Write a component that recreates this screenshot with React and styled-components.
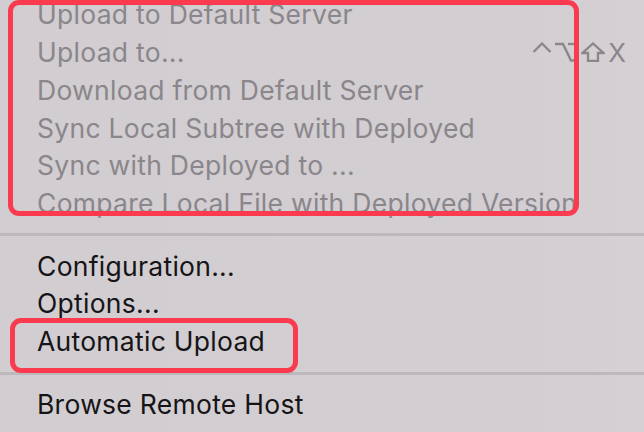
import React from "react";
import styled, { createGlobalStyle } from "styled-components";

const GlobalStyle = createGlobalStyle`
  html, body {
    margin: 0;
    padding: 0;
    background: #d1cdd1;
  }
  body {
    width: 644px;
    height: 432px;
    overflow: hidden;
    font-family: "Inter", "Liberation Sans", sans-serif;
  }
`;

const Menu = styled.div`
  position: relative;
  width: 644px;
  height: 432px;
  overflow: hidden;
  background: linear-gradient(90deg, #d1cdd1 0%, #d2ced2 80%, #d6d0d4 100%);
`;

const Group = styled.div`
  display: flex;
  flex-direction: column;
  margin-top: ${(p) => p.$offset || 0}px;
`;

const Row = styled.div`
  display: flex;
  align-items: center;
  justify-content: space-between;
  height: 37.7px;
  padding: 0 18px 0 37px;
  font-size: 26.5px;
  letter-spacing: 0.28px;
  white-space: nowrap;
  color: ${(p) => (p.$disabled ? "#8a868a" : "#161416")};
`;

const Label = styled.span`
  flex: none;
`;

const Shortcut = styled.span`
  display: flex;
  align-items: center;
  gap: 3px;
  color: #8a868a;
  font-size: 26px;
  letter-spacing: 0;
`;

const KeyGlyph = styled.svg`
  width: ${(p) => p.$w}px;
  height: 20px;
  flex: none;
  fill: none;
  stroke: currentColor;
  stroke-width: 2.3;
  stroke-linejoin: miter;
`;

const Separator = styled.div`
  height: 3px;
  background: #bcb8bc;
  margin: ${(p) => p.$top}px 0 ${(p) => p.$bottom}px;
`;

const Highlight = styled.div`
  position: absolute;
  left: ${(p) => p.$left}px;
  top: ${(p) => p.$top}px;
  width: ${(p) => p.$width}px;
  height: ${(p) => p.$height}px;
  box-sizing: border-box;
  border: 5px solid #fa3a4e;
  border-radius: 11px;
  pointer-events: none;
`;

const ControlKey = () => (
  <KeyGlyph $w={20} viewBox="0 0 20 20">
    <polyline points="1.5,10 10,1.5 18.5,10" />
  </KeyGlyph>
);

const OptionKey = () => (
  <KeyGlyph $w={23} viewBox="0 0 23 20">
    <polyline points="0,2 8,2 16,18.5 23,18.5" />
    <line x1="13" y1="2" x2="23" y2="2" />
  </KeyGlyph>
);

const ShiftKey = () => (
  <KeyGlyph $w={24} viewBox="0 0 24 20">
    <polygon points="12,1.5 22.5,11 17,11 17,19 7,19 7,11 1.5,11" />
  </KeyGlyph>
);

const remoteItems = [
  "Upload to Default Server",
  "Upload to...",
  "Download from Default Server",
  "Sync Local Subtree with Deployed",
  "Sync with Deployed to ...",
  "Compare Local File with Deployed Version",
];

const settingItems = ["Configuration...", "Options...", "Automatic Upload"];

export default function App() {
  return (
    <>
      <GlobalStyle />
      <Menu>
        <Group $offset={-4.4}>
          {remoteItems.map((item) => (
            <Row key={item} $disabled>
              <Label>{item}</Label>
              {item === "Upload to..." && (
                <Shortcut>
                  <ControlKey />
                  <OptionKey />
                  <ShiftKey />
                  <span>X</span>
                </Shortcut>
              )}
            </Row>
          ))}
        </Group>
        <Separator $top={11} $bottom={11} />
        <Group>
          {settingItems.map((item) => (
            <Row key={item}>
              <Label>{item}</Label>
            </Row>
          ))}
        </Group>
        <Separator $top={12} $bottom={10} />
        <Group>
          <Row>
            <Label>Browse Remote Host</Label>
          </Row>
        </Group>
        <Highlight $left={8} $top={0} $width={571} $height={216} />
        <Highlight $left={10} $top={318} $width={288} $height={55} />
      </Menu>
    </>
  );
}
